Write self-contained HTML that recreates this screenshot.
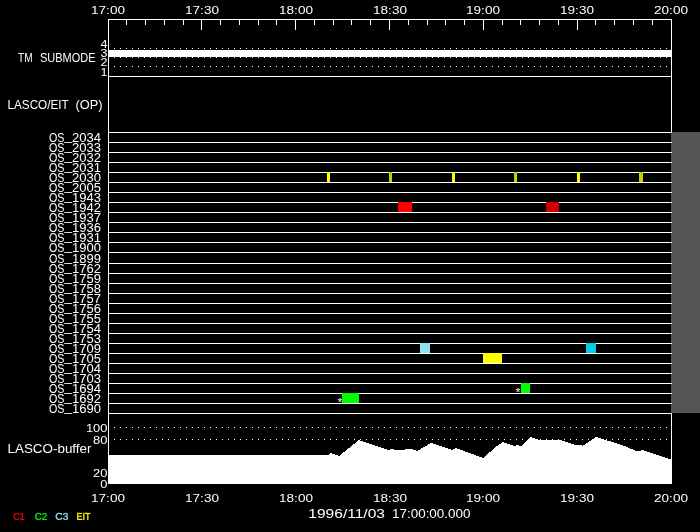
<!DOCTYPE html>
<html lang="en">
<head>
<meta charset="utf-8">
<title>LASCO/EIT observing plan 1996/11/03</title>
<style>
html,body{margin:0;padding:0;background:#000;}
body{width:700px;height:532px;overflow:hidden;}
svg{display:block;}
text{font-family:"Liberation Sans",sans-serif;font-size:12px;fill:#fff;}
</style>
</head>
<body>
<svg width="700" height="532" viewBox="0 0 700 532">
<rect x="0" y="0" width="700" height="532" fill="#000"/>
<g style="filter:grayscale(1) brightness(1.7)">
<text y="396" style="font-size:11px"><tspan x="515.6" textLength="5" lengthAdjust="spacingAndGlyphs">*</tspan></text>
<text y="406" style="font-size:11px"><tspan x="337.6" textLength="5" lengthAdjust="spacingAndGlyphs">*</tspan></text>
</g>
<g shape-rendering="crispEdges">
<rect x="671" y="132" width="29" height="281" fill="#555"/>
<rect x="108" y="19" width="1" height="465" fill="#fff"/>
<rect x="671" y="19" width="1" height="113" fill="#fff"/>
<rect x="671" y="413" width="1" height="71" fill="#fff"/>
<rect x="108" y="19" width="564" height="1" fill="#fff"/>
<rect x="108" y="76" width="564" height="1" fill="#fff"/>
<rect x="108" y="132" width="564" height="1" fill="#fff"/>
<rect x="108" y="142" width="564" height="1" fill="#fff"/>
<rect x="108" y="152" width="564" height="1" fill="#fff"/>
<rect x="108" y="162" width="564" height="1" fill="#fff"/>
<rect x="108" y="172" width="564" height="1" fill="#fff"/>
<rect x="108" y="182" width="564" height="1" fill="#fff"/>
<rect x="108" y="192" width="564" height="1" fill="#fff"/>
<rect x="108" y="202" width="564" height="1" fill="#fff"/>
<rect x="108" y="212" width="564" height="1" fill="#fff"/>
<rect x="108" y="222" width="564" height="1" fill="#fff"/>
<rect x="108" y="232" width="564" height="1" fill="#fff"/>
<rect x="108" y="242" width="564" height="1" fill="#fff"/>
<rect x="108" y="252" width="564" height="1" fill="#fff"/>
<rect x="108" y="263" width="564" height="1" fill="#fff"/>
<rect x="108" y="273" width="564" height="1" fill="#fff"/>
<rect x="108" y="283" width="564" height="1" fill="#fff"/>
<rect x="108" y="293" width="564" height="1" fill="#fff"/>
<rect x="108" y="303" width="564" height="1" fill="#fff"/>
<rect x="108" y="313" width="564" height="1" fill="#fff"/>
<rect x="108" y="323" width="564" height="1" fill="#fff"/>
<rect x="108" y="333" width="564" height="1" fill="#fff"/>
<rect x="108" y="343" width="564" height="1" fill="#fff"/>
<rect x="108" y="353" width="564" height="1" fill="#fff"/>
<rect x="108" y="363" width="564" height="1" fill="#fff"/>
<rect x="108" y="373" width="564" height="1" fill="#fff"/>
<rect x="108" y="383" width="564" height="1" fill="#fff"/>
<rect x="108" y="393" width="564" height="1" fill="#fff"/>
<rect x="108" y="403" width="564" height="1" fill="#fff"/>
<rect x="108" y="413" width="564" height="1" fill="#fff"/>
<rect x="108" y="19" width="1" height="11" fill="#fff"/>
<rect x="126" y="19" width="1" height="6" fill="#fff"/>
<rect x="145" y="19" width="1" height="6" fill="#fff"/>
<rect x="164" y="19" width="1" height="6" fill="#fff"/>
<rect x="183" y="19" width="1" height="6" fill="#fff"/>
<rect x="201" y="19" width="1" height="11" fill="#fff"/>
<rect x="220" y="19" width="1" height="6" fill="#fff"/>
<rect x="239" y="19" width="1" height="6" fill="#fff"/>
<rect x="258" y="19" width="1" height="6" fill="#fff"/>
<rect x="276" y="19" width="1" height="6" fill="#fff"/>
<rect x="295" y="19" width="1" height="11" fill="#fff"/>
<rect x="314" y="19" width="1" height="6" fill="#fff"/>
<rect x="333" y="19" width="1" height="6" fill="#fff"/>
<rect x="351" y="19" width="1" height="6" fill="#fff"/>
<rect x="370" y="19" width="1" height="6" fill="#fff"/>
<rect x="389" y="19" width="1" height="11" fill="#fff"/>
<rect x="408" y="19" width="1" height="6" fill="#fff"/>
<rect x="427" y="19" width="1" height="6" fill="#fff"/>
<rect x="445" y="19" width="1" height="6" fill="#fff"/>
<rect x="464" y="19" width="1" height="6" fill="#fff"/>
<rect x="483" y="19" width="1" height="11" fill="#fff"/>
<rect x="502" y="19" width="1" height="6" fill="#fff"/>
<rect x="520" y="19" width="1" height="6" fill="#fff"/>
<rect x="539" y="19" width="1" height="6" fill="#fff"/>
<rect x="558" y="19" width="1" height="6" fill="#fff"/>
<rect x="577" y="19" width="1" height="11" fill="#fff"/>
<rect x="595" y="19" width="1" height="6" fill="#fff"/>
<rect x="614" y="19" width="1" height="6" fill="#fff"/>
<rect x="633" y="19" width="1" height="6" fill="#fff"/>
<rect x="652" y="19" width="1" height="6" fill="#fff"/>
<rect x="671" y="19" width="1" height="11" fill="#fff"/>
<rect x="108" y="50" width="564" height="7" fill="#fff"/>
<path d="M114 48.5H668" stroke="#fff" stroke-width="1" stroke-dasharray="1 5" fill="none"/>
<path d="M114 57.5H668" stroke="#fff" stroke-width="1" stroke-dasharray="1 5" fill="none"/>
<path d="M114 66.5H668" stroke="#fff" stroke-width="1" stroke-dasharray="1 5" fill="none"/>
<path d="M114 427.5H668" stroke="#fff" stroke-width="1" stroke-dasharray="1 5" fill="none"/>
<path d="M114 439.5H668" stroke="#fff" stroke-width="1" stroke-dasharray="1 5" fill="none"/>
<rect x="327" y="172" width="3" height="10" fill="#ff0"/>
<rect x="389" y="172" width="3" height="10" fill="#cc0"/>
<rect x="452" y="172" width="3" height="10" fill="#ff0"/>
<rect x="514" y="172" width="3" height="10" fill="#cc0"/>
<rect x="577" y="172" width="3" height="10" fill="#ff0"/>
<rect x="639" y="172" width="4" height="10" fill="#cc0"/>
<rect x="398" y="202" width="14" height="10" fill="#f00"/>
<rect x="546" y="202" width="13" height="10" fill="#c00"/>
<rect x="420" y="343" width="10" height="10" fill="#8fe3ef"/>
<rect x="586" y="343" width="10" height="10" fill="#00cceb"/>
<rect x="483" y="353" width="19" height="10" fill="#ff0"/>
<rect x="521" y="383" width="9" height="10" fill="#0f0"/>
<rect x="342" y="393" width="17" height="10" fill="#0f0"/>
</g>
<polygon shape-rendering="crispEdges" fill="#fff" points="108,455 328,455 331,453 339,456 359,440 388,450 392,449 395,450 404,450 405,449 412,449 417,451 431,443 452,450 456,448 483,458 497,446 503,442 514,446 517,445 521,446 530,437 541,440.5 546,439.5 559,439.5 577,445.5 581,445 583,445.7 596,437 622,445 638,451.6 643,450 671,459.6 672,459.6 672,484 108,484"/>
<g style="filter:grayscale(1) brightness(1.25)">
<text y="14" style="font-size:11.2px"><tspan x="91" textLength="34" lengthAdjust="spacingAndGlyphs">17:00</tspan></text>
<text y="502" style="font-size:11.2px"><tspan x="91" textLength="34" lengthAdjust="spacingAndGlyphs">17:00</tspan></text>
<text y="14" style="font-size:11.2px"><tspan x="185" textLength="34" lengthAdjust="spacingAndGlyphs">17:30</tspan></text>
<text y="502" style="font-size:11.2px"><tspan x="185" textLength="34" lengthAdjust="spacingAndGlyphs">17:30</tspan></text>
<text y="14" style="font-size:11.2px"><tspan x="279" textLength="34" lengthAdjust="spacingAndGlyphs">18:00</tspan></text>
<text y="502" style="font-size:11.2px"><tspan x="279" textLength="34" lengthAdjust="spacingAndGlyphs">18:00</tspan></text>
<text y="14" style="font-size:11.2px"><tspan x="373" textLength="34" lengthAdjust="spacingAndGlyphs">18:30</tspan></text>
<text y="502" style="font-size:11.2px"><tspan x="373" textLength="34" lengthAdjust="spacingAndGlyphs">18:30</tspan></text>
<text y="14" style="font-size:11.2px"><tspan x="466" textLength="34" lengthAdjust="spacingAndGlyphs">19:00</tspan></text>
<text y="502" style="font-size:11.2px"><tspan x="466" textLength="34" lengthAdjust="spacingAndGlyphs">19:00</tspan></text>
<text y="14" style="font-size:11.2px"><tspan x="560" textLength="34" lengthAdjust="spacingAndGlyphs">19:30</tspan></text>
<text y="502" style="font-size:11.2px"><tspan x="560" textLength="34" lengthAdjust="spacingAndGlyphs">19:30</tspan></text>
<text y="14" style="font-size:11.2px"><tspan x="654" textLength="34" lengthAdjust="spacingAndGlyphs">20:00</tspan></text>
<text y="502" style="font-size:11.2px"><tspan x="654" textLength="34" lengthAdjust="spacingAndGlyphs">20:00</tspan></text>
<text y="62" style="font-size:12.5px"><tspan x="18" textLength="14.5" lengthAdjust="spacingAndGlyphs">TM</tspan> <tspan x="40" textLength="55.5" lengthAdjust="spacingAndGlyphs">SUBMODE</tspan></text>
<text y="109" style="font-size:12.5px"><tspan x="7.5" textLength="61" lengthAdjust="spacingAndGlyphs">LASCO/EIT</tspan> <tspan x="75.5" textLength="27" lengthAdjust="spacingAndGlyphs">(OP)</tspan></text>
<text y="453" style="font-size:12.5px"><tspan x="7.5" textLength="84" lengthAdjust="spacingAndGlyphs">LASCO-buffer</tspan></text>
<text y="142" style="font-size:12.5px"><tspan x="49" textLength="15.5" lengthAdjust="spacingAndGlyphs">OS</tspan><tspan x="64.5" dy="-2.5" textLength="7.5" lengthAdjust="spacingAndGlyphs">_</tspan><tspan x="72" dy="2.5" textLength="29" lengthAdjust="spacingAndGlyphs">2034</tspan></text>
<text y="152" style="font-size:12.5px"><tspan x="49" textLength="15.5" lengthAdjust="spacingAndGlyphs">OS</tspan><tspan x="64.5" dy="-2.5" textLength="7.5" lengthAdjust="spacingAndGlyphs">_</tspan><tspan x="72" dy="2.5" textLength="29" lengthAdjust="spacingAndGlyphs">2033</tspan></text>
<text y="162" style="font-size:12.5px"><tspan x="49" textLength="15.5" lengthAdjust="spacingAndGlyphs">OS</tspan><tspan x="64.5" dy="-2.5" textLength="7.5" lengthAdjust="spacingAndGlyphs">_</tspan><tspan x="72" dy="2.5" textLength="29" lengthAdjust="spacingAndGlyphs">2032</tspan></text>
<text y="172" style="font-size:12.5px"><tspan x="49" textLength="15.5" lengthAdjust="spacingAndGlyphs">OS</tspan><tspan x="64.5" dy="-2.5" textLength="7.5" lengthAdjust="spacingAndGlyphs">_</tspan><tspan x="72" dy="2.5" textLength="29" lengthAdjust="spacingAndGlyphs">2031</tspan></text>
<text y="182" style="font-size:12.5px"><tspan x="49" textLength="15.5" lengthAdjust="spacingAndGlyphs">OS</tspan><tspan x="64.5" dy="-2.5" textLength="7.5" lengthAdjust="spacingAndGlyphs">_</tspan><tspan x="72" dy="2.5" textLength="29" lengthAdjust="spacingAndGlyphs">2030</tspan></text>
<text y="192" style="font-size:12.5px"><tspan x="49" textLength="15.5" lengthAdjust="spacingAndGlyphs">OS</tspan><tspan x="64.5" dy="-2.5" textLength="7.5" lengthAdjust="spacingAndGlyphs">_</tspan><tspan x="72" dy="2.5" textLength="29" lengthAdjust="spacingAndGlyphs">2005</tspan></text>
<text y="202" style="font-size:12.5px"><tspan x="49" textLength="15.5" lengthAdjust="spacingAndGlyphs">OS</tspan><tspan x="64.5" dy="-2.5" textLength="7.5" lengthAdjust="spacingAndGlyphs">_</tspan><tspan x="72" dy="2.5" textLength="29" lengthAdjust="spacingAndGlyphs">1943</tspan></text>
<text y="212" style="font-size:12.5px"><tspan x="49" textLength="15.5" lengthAdjust="spacingAndGlyphs">OS</tspan><tspan x="64.5" dy="-2.5" textLength="7.5" lengthAdjust="spacingAndGlyphs">_</tspan><tspan x="72" dy="2.5" textLength="29" lengthAdjust="spacingAndGlyphs">1942</tspan></text>
<text y="222" style="font-size:12.5px"><tspan x="49" textLength="15.5" lengthAdjust="spacingAndGlyphs">OS</tspan><tspan x="64.5" dy="-2.5" textLength="7.5" lengthAdjust="spacingAndGlyphs">_</tspan><tspan x="72" dy="2.5" textLength="29" lengthAdjust="spacingAndGlyphs">1937</tspan></text>
<text y="232" style="font-size:12.5px"><tspan x="49" textLength="15.5" lengthAdjust="spacingAndGlyphs">OS</tspan><tspan x="64.5" dy="-2.5" textLength="7.5" lengthAdjust="spacingAndGlyphs">_</tspan><tspan x="72" dy="2.5" textLength="29" lengthAdjust="spacingAndGlyphs">1936</tspan></text>
<text y="242" style="font-size:12.5px"><tspan x="49" textLength="15.5" lengthAdjust="spacingAndGlyphs">OS</tspan><tspan x="64.5" dy="-2.5" textLength="7.5" lengthAdjust="spacingAndGlyphs">_</tspan><tspan x="72" dy="2.5" textLength="29" lengthAdjust="spacingAndGlyphs">1931</tspan></text>
<text y="252" style="font-size:12.5px"><tspan x="49" textLength="15.5" lengthAdjust="spacingAndGlyphs">OS</tspan><tspan x="64.5" dy="-2.5" textLength="7.5" lengthAdjust="spacingAndGlyphs">_</tspan><tspan x="72" dy="2.5" textLength="29" lengthAdjust="spacingAndGlyphs">1900</tspan></text>
<text y="263" style="font-size:12.5px"><tspan x="49" textLength="15.5" lengthAdjust="spacingAndGlyphs">OS</tspan><tspan x="64.5" dy="-2.5" textLength="7.5" lengthAdjust="spacingAndGlyphs">_</tspan><tspan x="72" dy="2.5" textLength="29" lengthAdjust="spacingAndGlyphs">1899</tspan></text>
<text y="273" style="font-size:12.5px"><tspan x="49" textLength="15.5" lengthAdjust="spacingAndGlyphs">OS</tspan><tspan x="64.5" dy="-2.5" textLength="7.5" lengthAdjust="spacingAndGlyphs">_</tspan><tspan x="72" dy="2.5" textLength="29" lengthAdjust="spacingAndGlyphs">1762</tspan></text>
<text y="283" style="font-size:12.5px"><tspan x="49" textLength="15.5" lengthAdjust="spacingAndGlyphs">OS</tspan><tspan x="64.5" dy="-2.5" textLength="7.5" lengthAdjust="spacingAndGlyphs">_</tspan><tspan x="72" dy="2.5" textLength="29" lengthAdjust="spacingAndGlyphs">1759</tspan></text>
<text y="293" style="font-size:12.5px"><tspan x="49" textLength="15.5" lengthAdjust="spacingAndGlyphs">OS</tspan><tspan x="64.5" dy="-2.5" textLength="7.5" lengthAdjust="spacingAndGlyphs">_</tspan><tspan x="72" dy="2.5" textLength="29" lengthAdjust="spacingAndGlyphs">1758</tspan></text>
<text y="303" style="font-size:12.5px"><tspan x="49" textLength="15.5" lengthAdjust="spacingAndGlyphs">OS</tspan><tspan x="64.5" dy="-2.5" textLength="7.5" lengthAdjust="spacingAndGlyphs">_</tspan><tspan x="72" dy="2.5" textLength="29" lengthAdjust="spacingAndGlyphs">1757</tspan></text>
<text y="313" style="font-size:12.5px"><tspan x="49" textLength="15.5" lengthAdjust="spacingAndGlyphs">OS</tspan><tspan x="64.5" dy="-2.5" textLength="7.5" lengthAdjust="spacingAndGlyphs">_</tspan><tspan x="72" dy="2.5" textLength="29" lengthAdjust="spacingAndGlyphs">1756</tspan></text>
<text y="323" style="font-size:12.5px"><tspan x="49" textLength="15.5" lengthAdjust="spacingAndGlyphs">OS</tspan><tspan x="64.5" dy="-2.5" textLength="7.5" lengthAdjust="spacingAndGlyphs">_</tspan><tspan x="72" dy="2.5" textLength="29" lengthAdjust="spacingAndGlyphs">1755</tspan></text>
<text y="333" style="font-size:12.5px"><tspan x="49" textLength="15.5" lengthAdjust="spacingAndGlyphs">OS</tspan><tspan x="64.5" dy="-2.5" textLength="7.5" lengthAdjust="spacingAndGlyphs">_</tspan><tspan x="72" dy="2.5" textLength="29" lengthAdjust="spacingAndGlyphs">1754</tspan></text>
<text y="343" style="font-size:12.5px"><tspan x="49" textLength="15.5" lengthAdjust="spacingAndGlyphs">OS</tspan><tspan x="64.5" dy="-2.5" textLength="7.5" lengthAdjust="spacingAndGlyphs">_</tspan><tspan x="72" dy="2.5" textLength="29" lengthAdjust="spacingAndGlyphs">1753</tspan></text>
<text y="353" style="font-size:12.5px"><tspan x="49" textLength="15.5" lengthAdjust="spacingAndGlyphs">OS</tspan><tspan x="64.5" dy="-2.5" textLength="7.5" lengthAdjust="spacingAndGlyphs">_</tspan><tspan x="72" dy="2.5" textLength="29" lengthAdjust="spacingAndGlyphs">1709</tspan></text>
<text y="363" style="font-size:12.5px"><tspan x="49" textLength="15.5" lengthAdjust="spacingAndGlyphs">OS</tspan><tspan x="64.5" dy="-2.5" textLength="7.5" lengthAdjust="spacingAndGlyphs">_</tspan><tspan x="72" dy="2.5" textLength="29" lengthAdjust="spacingAndGlyphs">1705</tspan></text>
<text y="373" style="font-size:12.5px"><tspan x="49" textLength="15.5" lengthAdjust="spacingAndGlyphs">OS</tspan><tspan x="64.5" dy="-2.5" textLength="7.5" lengthAdjust="spacingAndGlyphs">_</tspan><tspan x="72" dy="2.5" textLength="29" lengthAdjust="spacingAndGlyphs">1704</tspan></text>
<text y="383" style="font-size:12.5px"><tspan x="49" textLength="15.5" lengthAdjust="spacingAndGlyphs">OS</tspan><tspan x="64.5" dy="-2.5" textLength="7.5" lengthAdjust="spacingAndGlyphs">_</tspan><tspan x="72" dy="2.5" textLength="29" lengthAdjust="spacingAndGlyphs">1703</tspan></text>
<text y="393" style="font-size:12.5px"><tspan x="49" textLength="15.5" lengthAdjust="spacingAndGlyphs">OS</tspan><tspan x="64.5" dy="-2.5" textLength="7.5" lengthAdjust="spacingAndGlyphs">_</tspan><tspan x="72" dy="2.5" textLength="29" lengthAdjust="spacingAndGlyphs">1694</tspan></text>
<text y="403" style="font-size:12.5px"><tspan x="49" textLength="15.5" lengthAdjust="spacingAndGlyphs">OS</tspan><tspan x="64.5" dy="-2.5" textLength="7.5" lengthAdjust="spacingAndGlyphs">_</tspan><tspan x="72" dy="2.5" textLength="29" lengthAdjust="spacingAndGlyphs">1692</tspan></text>
<text y="413" style="font-size:12.5px"><tspan x="49" textLength="15.5" lengthAdjust="spacingAndGlyphs">OS</tspan><tspan x="64.5" dy="-2.5" textLength="7.5" lengthAdjust="spacingAndGlyphs">_</tspan><tspan x="72" dy="2.5" textLength="29" lengthAdjust="spacingAndGlyphs">1690</tspan></text>
<text y="48" style="font-size:11.2px"><tspan x="100.5" textLength="7" lengthAdjust="spacingAndGlyphs">4</tspan></text>
<text y="57" style="font-size:11.2px"><tspan x="100.5" textLength="7" lengthAdjust="spacingAndGlyphs">3</tspan></text>
<text y="66" style="font-size:11.2px"><tspan x="100.5" textLength="7" lengthAdjust="spacingAndGlyphs">2</tspan></text>
<text y="76" style="font-size:11.2px"><tspan x="100.5" textLength="7" lengthAdjust="spacingAndGlyphs">1</tspan></text>
<text y="432" style="font-size:11.2px"><tspan x="85.9" textLength="21.6" lengthAdjust="spacingAndGlyphs">100</tspan></text>
<text y="444" style="font-size:11.2px"><tspan x="93.1" textLength="14.4" lengthAdjust="spacingAndGlyphs">80</tspan></text>
<text y="477" style="font-size:11.2px"><tspan x="93.1" textLength="14.4" lengthAdjust="spacingAndGlyphs">20</tspan></text>
<text y="488" style="font-size:11.2px"><tspan x="100.3" textLength="7.2" lengthAdjust="spacingAndGlyphs">0</tspan></text>
<text y="518" style="font-size:12.5px"><tspan x="308.3" textLength="76.7" lengthAdjust="spacingAndGlyphs">1996/11/03</tspan> <tspan x="392" textLength="78.5" lengthAdjust="spacingAndGlyphs">17:00:00.000</tspan></text>
</g>
<g style="filter:brightness(1)">
<text y="519.85" transform="rotate(0.2 13.3 519.85)" style="font-size:9.8px;fill:#f00;stroke:#f00;stroke-width:0.3px"><tspan x="13.3" textLength="11.5" lengthAdjust="spacingAndGlyphs">C1</tspan></text>
<text y="519.85" transform="rotate(0.2 34.7 519.85)" style="font-size:9.8px;fill:#0f0;stroke:#0f0;stroke-width:0.3px"><tspan x="34.7" textLength="12.5" lengthAdjust="spacingAndGlyphs">C2</tspan></text>
<text y="519.85" transform="rotate(0.2 55.3 519.85)" style="font-size:9.8px;fill:#8fe3ef;stroke:#8fe3ef;stroke-width:0.3px"><tspan x="55.3" textLength="13" lengthAdjust="spacingAndGlyphs">C3</tspan></text>
<text y="519.85" transform="rotate(0.2 76.5 519.85)" style="font-size:9.8px;fill:#ff0;stroke:#ff0;stroke-width:0.3px"><tspan x="76.5" textLength="14" lengthAdjust="spacingAndGlyphs">EIT</tspan></text>
</g>
</svg>
</body>
</html>
